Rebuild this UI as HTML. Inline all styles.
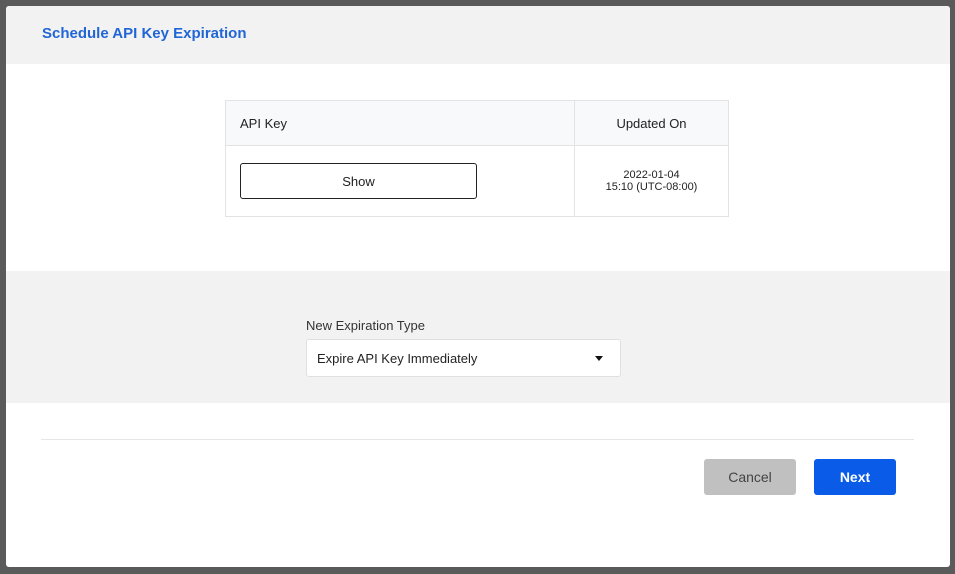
<!DOCTYPE html>
<html><head><meta charset="utf-8"><style>
*{box-sizing:border-box;margin:0;padding:0}
body{width:955px;height:574px;background:#5a5a5a;font-family:"Liberation Sans",sans-serif;position:relative;overflow:hidden}
.modal{position:absolute;left:6px;top:6px;width:944px;height:561px;background:#fff;border-radius:3px;overflow:hidden}
.hdr{position:absolute;left:0;top:0;width:100%;height:58px;background:#f2f2f2}
.hdr h1{position:absolute;left:36px;top:19px;font-size:15px;font-weight:bold;color:#2166d6}
table{position:absolute;left:219px;top:94px;width:504px;border-collapse:collapse;font-size:13px;color:#222}
td,th{border:1px solid #e3e3e3}
th{height:45px;background:#f8f9fa;font-weight:normal}
th.k{text-align:left;padding-left:14px}
td{height:71px}
td.k{padding-left:14px}
.show{width:237px;height:36px;border:1px solid #222;border-radius:3px;display:flex;align-items:center;justify-content:center;font-size:13px}
td.d{text-align:center;font-size:11px;line-height:12px;width:154px}
.band{position:absolute;left:0;top:265px;width:100%;height:132px;background:#f2f2f2}
.lbl{position:absolute;left:300px;top:47px;font-size:13px;color:#333}
.sel{position:absolute;left:300px;top:68px;width:315px;height:38px;background:#fff;border:1px solid #e0e0e0;border-radius:3px;font-size:13px;color:#222;padding:11px 0 0 10px}
.sel:after{content:"";position:absolute;right:17px;top:16px;border-left:4px solid transparent;border-right:4px solid transparent;border-top:5px solid #111}
.line{position:absolute;left:35px;top:433px;width:873px;height:1px;background:#e6e6e6}
.btn{position:absolute;top:453px;height:36px;border-radius:3px;display:flex;align-items:center;justify-content:center;font-size:14px}
.c{left:698px;width:92px;background:#c0c0c0;color:#444}
.n{left:808px;width:82px;background:#0a5ce8;color:#fff;font-weight:bold}
</style></head><body>
<div class="modal">
<div class="hdr"><h1>Schedule API Key Expiration</h1></div>
<table>
<tr><th class="k">API Key</th><th>Updated On</th></tr>
<tr><td class="k"><div class="show">Show</div></td><td class="d">2022-01-04<br>15:10 (UTC-08:00)</td></tr>
</table>
<div class="band"><div class="lbl">New Expiration Type</div><div class="sel">Expire API Key Immediately</div></div>
<div class="line"></div>
<div class="btn c">Cancel</div>
<div class="btn n">Next</div>
</div>
</body></html>
